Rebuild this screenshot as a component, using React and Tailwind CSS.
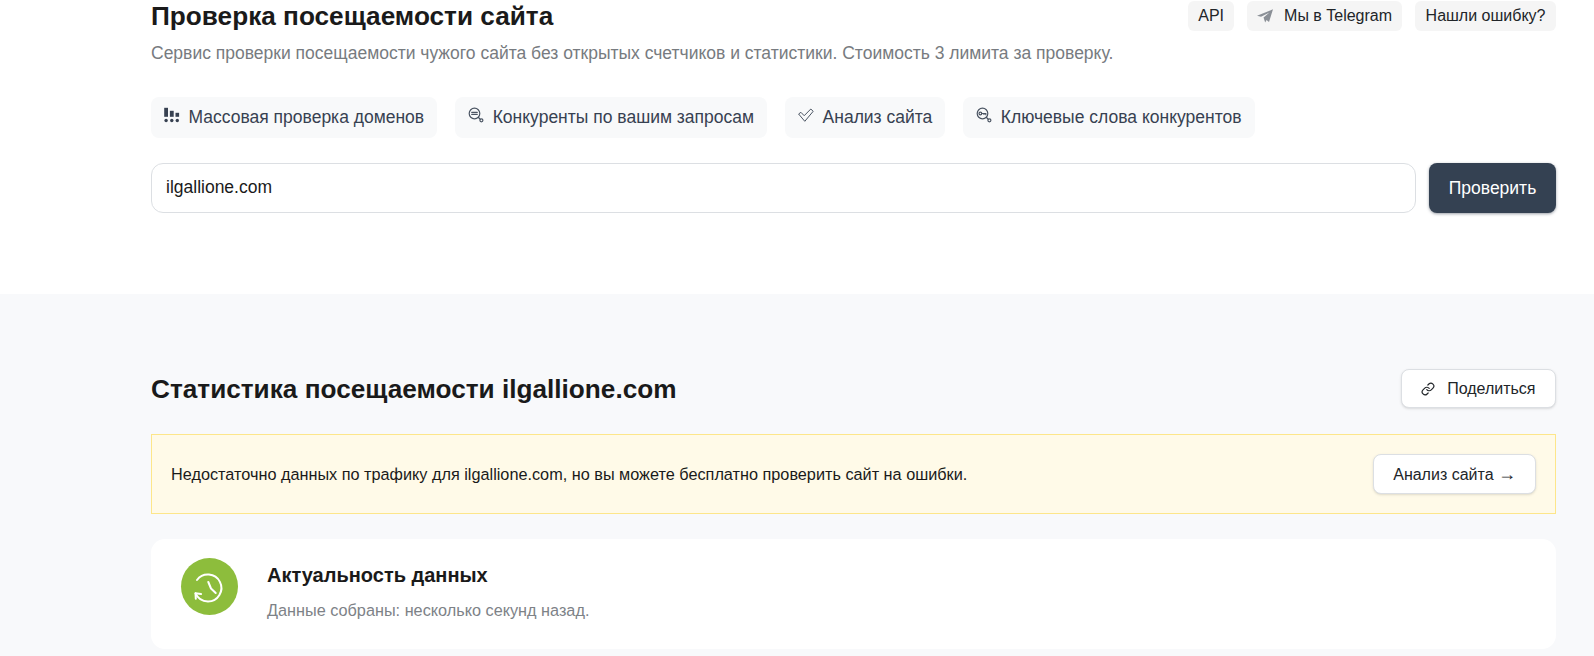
import { Link } from "lucide-react";

const chips = [
  { label: "Массовая проверка доменов", icon: <BarsIcon /> },
  { label: "Конкуренты по вашим запросам", icon: <SearchListIcon /> },
  { label: "Анализ сайта", icon: <CheckIcon /> },
  { label: "Ключевые слова конкурентов", icon: <SearchKeyIcon /> },
];

function BarsIcon() {
  return (
    <svg width="16" height="16" viewBox="0 0 16 16" fill="#374151" className="-mt-[5px]">
      <rect x="0.2" y="0.8" width="3.8" height="9" />
      <rect x="5.9" y="3.8" width="3.8" height="6" />
      <rect x="11.5" y="5.8" width="3.6" height="4" />
      <circle cx="2.1" cy="13.5" r="1.7" />
      <circle cx="7.8" cy="13.5" r="1.7" />
      <circle cx="13.3" cy="13.5" r="1.7" />
    </svg>
  );
}

function SearchListIcon() {
  return (
    <svg width="16" height="16" viewBox="0 0 16 16" fill="none" stroke="#4b5563" strokeWidth="1.2" strokeLinecap="round" className="-mt-[5px]">
      <circle cx="6.5" cy="6.5" r="5.3" />
      <path d="M3.8 5.4h5.4M3.8 7.4h5.4" strokeWidth="1.3" />
      <path d="M10.5 10.5l1.5 1.5" />
      <circle cx="13.4" cy="13.3" r="1.5" />
    </svg>
  );
}

function SearchKeyIcon() {
  return (
    <svg width="16" height="16" viewBox="0 0 16 16" fill="none" stroke="#4b5563" strokeWidth="1.2" strokeLinecap="round" className="-mt-[5px]">
      <circle cx="6.5" cy="6.5" r="5.3" />
      <circle cx="4.4" cy="6.5" r="1.4" />
      <path d="M5.8 6.5h4v1.2M8 6.5v1" />
      <path d="M10.5 10.5l1.5 1.5" />
      <circle cx="13.4" cy="13.3" r="1.5" />
    </svg>
  );
}

function CheckIcon() {
  return (
    <svg width="16" height="16" viewBox="0 0 16 16" fill="none" stroke="#4b5563" strokeWidth="1" strokeLinejoin="round" className="-mt-[5px]">
      <path d="M0.6 7l2.3-1.7 3.3 3.4L12.8 2l2.4 2.3-8.4 10z" />
    </svg>
  );
}

function TelegramIcon() {
  return (
    <svg width="16" height="14" viewBox="0 0 16 14" fill="#8a8f96">
      <path d="M0 6.7L16 0.3 12 13 9.5 11 8.2 13.5 6.5 8.6 12.5 3.5 4 7.8z" />
    </svg>
  );
}

function HistoryIcon() {
  return (
    <svg width="32" height="32" viewBox="0 0 32 32" fill="none" stroke="white" strokeWidth="2" strokeLinecap="round" strokeLinejoin="round">
      <path d="M3 9A13.5 13.5 0 1 1 14 30.5Q5 30 1.5 22.3" />
      <path d="M7 23L1.5 22.3 1.8 27.7" />
      <path d="M14.3 11L17 17.5 21.7 22" />
    </svg>
  );
}

const App = () => {
  return (
    <div className="w-full h-[656px] overflow-hidden bg-white font-['Liberation_Sans',Arial,sans-serif]">
      <div className="pl-[151px] pr-[38px] pt-px h-[294px]">
        {/* Header */}
        <div className="flex items-start justify-between">
          <h1 className="text-[26.2px] leading-[30px] font-bold text-[#1a1a1a]">
            Проверка посещаемости сайта
          </h1>
          <div className="flex gap-[13px]">
            <button className="h-[30px] px-[10px] rounded-md bg-[#f5f5f5] text-[16px] text-[#212529]">
              API
            </button>
            <button className="h-[30px] px-[10px] rounded-md bg-[#f5f5f5] text-[16px] text-[#212529] flex items-center gap-[11px]">
              <TelegramIcon />
              Мы в Telegram
            </button>
            <button className="h-[30px] px-[10.5px] rounded-md bg-[#f5f5f5] text-[16px] text-[#212529]">
              Нашли ошибку?
            </button>
          </div>
        </div>
        <p className="mt-[10px] text-[17.5px] leading-6 text-[#777b80]">
          Сервис проверки посещаемости чужого сайта без открытых счетчиков и статистики. Стоимость 3 лимита за проверку.
        </p>

        {/* Chips */}
        <div className="flex gap-[18px] mt-[32px]">
          {chips.map((chip) => (
            <a
              key={chip.label}
              className="h-[41px] px-[13px] flex items-center gap-[8.5px] rounded-lg bg-[#f8f9fa] text-[17.5px] text-[#374151]"
            >
              {chip.icon}
              {chip.label}
            </a>
          ))}
        </div>

        {/* Search */}
        <div className="flex gap-[13px] mt-[25px]">
          <input
            readOnly
            value="ilgallione.com"
            className="flex-1 h-[50px] px-[14px] pb-[2px] rounded-xl border border-[#dcdfe3] bg-white text-[17.5px] text-[#1a1a1a] outline-none"
          />
          <button className="w-[127px] h-[50px] rounded-lg bg-[#344152] text-white text-[17.5px] shadow-[0_1px_3px_rgba(55,65,81,0.5)]">
            Проверить
          </button>
        </div>
      </div>

      <div className="bg-[#f8f9fb] pl-[151px] pr-[38px] pt-[75px] h-[362px]">
        <div className="flex items-center justify-between">
          <h2 className="pt-[2px] text-[26.2px] leading-[37px] font-bold text-[#1a1a1a]">
            Статистика посещаемости ilgallione.com
          </h2>
          <button className="h-[39px] px-[19.5px] rounded-lg border border-[#dcdfe3] bg-white text-[16px] text-[#212529] flex items-center gap-3 shadow-sm">
            <Link size={14} strokeWidth={2} />
            Поделиться
          </button>
        </div>

        {/* Alert */}
        <div className="mt-[26px] h-[80px] px-[19px] flex items-center justify-between border border-[#fde68a] bg-[#fffae8]">
          <span className="pt-[1px] text-[16.25px] text-[#1a1a1a]">
            Недостаточно данных по трафику для ilgallione.com, но вы можете бесплатно проверить сайт на ошибки.
          </span>
          <button className="h-10 px-[19px] pt-[1px] rounded-lg border border-[#dcdfe3] bg-white text-[16px] text-[#212529] shadow-sm">
            Анализ сайта <span className="text-[18px] leading-none">→</span>
          </button>
        </div>

        {/* Freshness card */}
        <div className="mt-[25px] h-[110px] rounded-[14px] bg-white flex pl-[30px] pt-[19px]">
          <div className="w-[57px] h-[57px] rounded-full bg-[#8dbd3c] flex items-center justify-center">
            <HistoryIcon />
          </div>
          <div className="ml-[29px]">
            <div className="text-[20px] leading-[34px] font-bold text-[#1a1a1a]">Актуальность данных</div>
            <div className="mt-[7px] text-[16.25px] leading-[22px] text-[#7d8287]">
              Данные собраны: несколько секунд назад.
            </div>
          </div>
        </div>
      </div>
    </div>
  );
};

export default App;
